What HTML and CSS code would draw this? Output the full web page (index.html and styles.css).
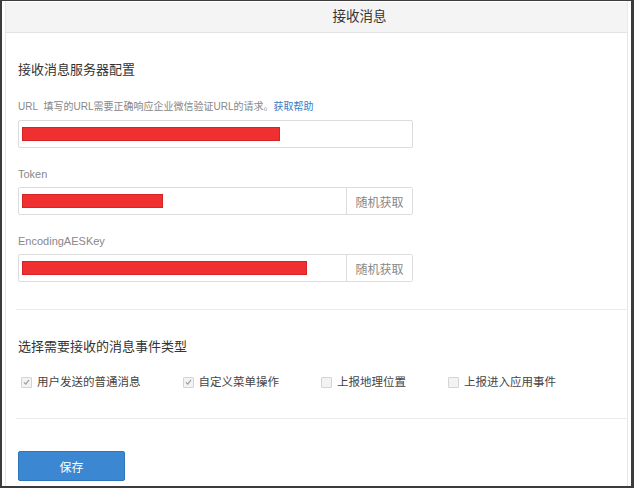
FILE: index.html
```html
<!DOCTYPE html>
<html lang="zh-CN">
<head>
    <meta charset="UTF-8">
    <meta name="viewport" content="width=device-width, initial-scale=1.0">
    <title>接收消息</title>
    <link rel="stylesheet" href="styles.css">
</head>
<body>
    <div class="frame">
        <div class="panel">
            <div class="header">接收消息</div>

            <div class="section">
                <h2 class="section-title first">接收消息服务器配置</h2>

                <div class="field-label">URL&nbsp;&nbsp;填写的URL需要正确响应企业微信验证URL的请求。<a class="help">获取帮助</a></div>
                <div class="input">
                    <div class="input-value"><span class="redact" style="width: 258px"></span></div>
                </div>

                <div class="field-label gap">Token</div>
                <div class="input">
                    <div class="input-value"><span class="redact" style="width: 141px"></span></div>
                    <button class="addon">随机获取</button>
                </div>

                <div class="field-label gap">EncodingAESKey</div>
                <div class="input">
                    <div class="input-value"><span class="redact" style="width: 285px"></span></div>
                    <button class="addon">随机获取</button>
                </div>
            </div>

            <hr class="divider">

            <div class="section">
                <h2 class="section-title">选择需要接收的消息事件类型</h2>
                <div class="checks">
                    <label class="check checked"><span class="box"><svg viewBox="0 0 10 10" width="10" height="10"><path d="M2.2 5.3 L4.2 7.3 L7.8 2.6" fill="none" stroke="#9a9a9a" stroke-width="1.2"/></svg></span>用户发送的普通消息</label>
                    <label class="check checked"><span class="box"><svg viewBox="0 0 10 10" width="10" height="10"><path d="M2.2 5.3 L4.2 7.3 L7.8 2.6" fill="none" stroke="#9a9a9a" stroke-width="1.2"/></svg></span>自定义菜单操作</label>
                    <label class="check"><span class="box"></span>上报地理位置</label>
                    <label class="check"><span class="box"></span>上报进入应用事件</label>
                </div>
            </div>

            <hr class="divider lower">

            <div class="section">
                <button class="save">保存</button>
            </div>
        </div>
    </div>
</body>
</html>
```

FILE: styles.css
```css
body {
    margin: 0;
    font-family: "Liberation Sans", "Noto Sans CJK SC", sans-serif;
    color: #333333;
    background-color: #ffffff;
}
.frame {
    width: 634px;
    height: 488px;
    box-sizing: border-box;
    border: 2px solid #3c3c3c;
    border-top-width: 1px;
    border-right-width: 3px;
    padding: 0 3px;
    overflow: hidden;
}
.panel {
    height: 100%;
    border-left: 1px solid #e8e8e8;
    border-right: 1px solid #e8e8e8;
    padding-top: 1px;
    box-sizing: border-box;
}
.header {
    height: 30px;
    line-height: 30px;
    background-color: #f4f4f4;
    border-bottom: 1px solid #e3e3e3;
    font-size: 13.5px;
    color: #333333;
    text-align: center;
    padding-left: 86px;
}
.section {
    padding-left: 12px;
}
.section-title {
    margin: 0;
    font-size: 13px;
    font-weight: normal;
    line-height: 20px;
    color: #333333;
    padding-top: 27px;
}
.section-title.first {
    padding-top: 27px;
}
.field-label {
    font-size: 11px;
    line-height: 16px;
    color: #888888;
    margin-top: 19px;
    margin-bottom: 5px;
}
.field-label:first-of-type {
    font-size: 10px;
}
.field-label.gap {
    margin-top: 18px;
    font-size: 11px;
}
.help {
    color: #3a7bc4;
}
.input {
    display: flex;
    width: 395px;
    height: 28px;
    box-sizing: border-box;
    border: 1px solid #dcdcdc;
    border-radius: 2px;
    background-color: #ffffff;
}
.input-value {
    flex: 1;
    display: flex;
    align-items: center;
    padding-left: 3px;
}
.redact {
    display: block;
    height: 14px;
    background-color: #f03030;
    border: 1px solid #d42424;
    box-sizing: border-box;
}
.addon {
    width: 66px;
    border: none;
    border-left: 1px solid #dcdcdc;
    background-color: #ffffff;
    color: #888888;
    font-family: "Noto Sans CJK SC", sans-serif;
    font-size: 12px;
    padding: 0;
}
.divider {
    border: none;
    border-top: 1px solid #ebebeb;
    margin: 27px 0 0 10px;
}
.divider.lower {
    margin-top: 28px;
}
.checks {
    display: flex;
    margin-top: 17px;
    padding-left: 3px;
}
.check {
    display: flex;
    align-items: center;
    font-size: 11.5px;
    line-height: 16px;
    color: #444444;
    margin-right: 42px;
}
.box {
    width: 9px;
    height: 9px;
    border: 1px solid #d4d4d4;
    background-color: #f3f3f3;
    border-radius: 1px;
    margin-right: 5px;
    display: flex;
    align-items: center;
    justify-content: center;
}
.box svg {
    display: block;
}
.save {
    margin-top: 32px;
    width: 107px;
    height: 30px;
    border: 1px solid #2f75bd;
    border-radius: 2px;
    background-color: #3b87d1;
    color: #ffffff;
    font-family: "Noto Sans CJK SC", sans-serif;
    font-size: 12px;
}
```
